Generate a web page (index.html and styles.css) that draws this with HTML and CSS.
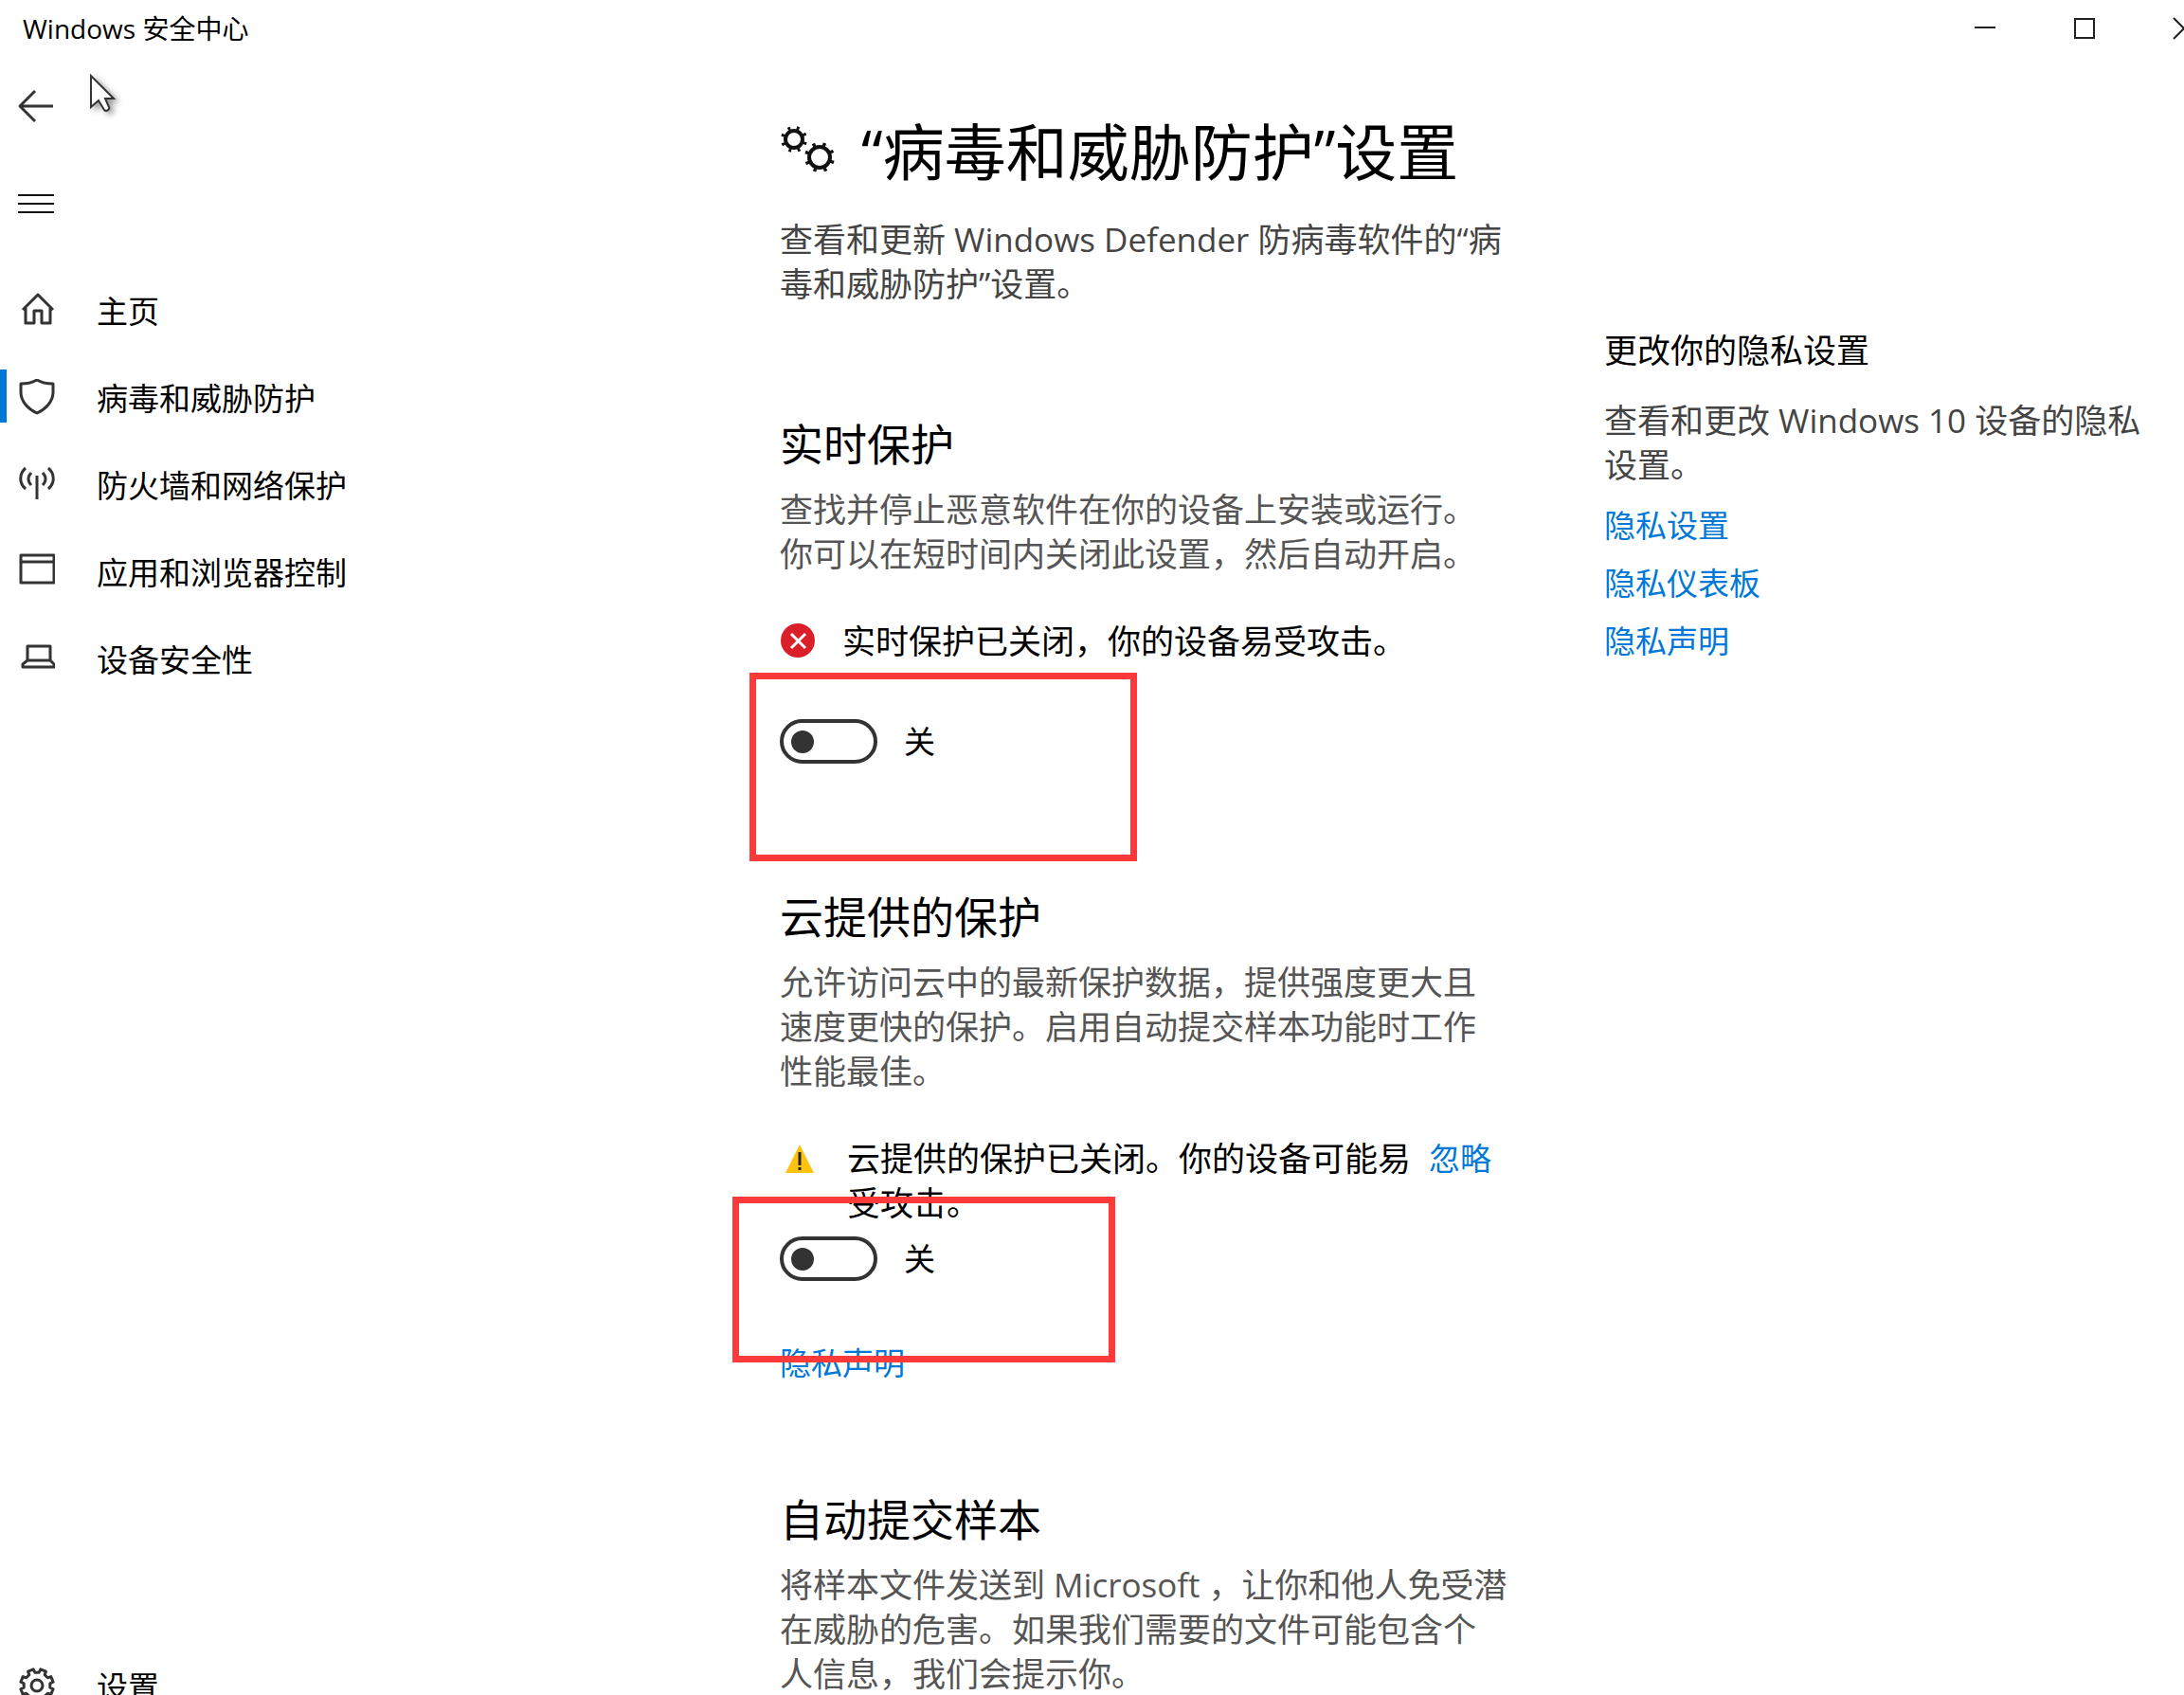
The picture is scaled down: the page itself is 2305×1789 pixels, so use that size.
FILE: index.html
```html
<!DOCTYPE html>
<html lang="zh-CN">
<head>
    <meta charset="UTF-8">
    <meta name="viewport" content="width=device-width, initial-scale=1.0">
    <title>Windows 安全中心</title>
    <link rel="stylesheet" href="styles.css">
</head>
<body>

<header class="titlebar">
    <span class="titlebar-text">Windows 安全中心</span>
    <div class="window-buttons">
        <button type="button" aria-label="最小化">
            <svg width="24" height="24" viewBox="0 0 24 24"><path d="M1 11H23"/></svg>
        </button>
        <button type="button" aria-label="最大化">
            <svg width="24" height="24" viewBox="0 0 24 24"><path d="M2 2H22V22H2Z"/></svg>
        </button>
        <button type="button" aria-label="关闭">
            <svg width="24" height="24" viewBox="0 0 24 24"><path d="M1 1L23 23M23 1L1 23"/></svg>
        </button>
    </div>
</header>

<div class="layout">
    <nav class="sidebar">
        <button type="button" class="icon-button" aria-label="返回">
            <svg class="icon" width="40" height="40" viewBox="0 0 40 40"><path d="M38 20H3M19 4L3 20L19 36"/></svg>
        </button>
        <button type="button" class="icon-button" aria-label="菜单">
            <svg class="icon thin" width="40" height="40" viewBox="0 0 40 40"><path d="M1 11H39M1 20H39M1 29H39"/></svg>
        </button>

        <ul class="nav-list">
            <li><a href="#" class="nav-item">
                <svg class="icon" width="40" height="40" viewBox="0 0 40 40"><path d="M6 19L22 3L38 19M9 17V33H18V20H26V33H35V17"/></svg>
                主页
            </a></li>
            <li><a href="#" class="nav-item active">
                <svg class="icon" width="40" height="40" viewBox="0 0 40 40"><path d="M21 1C16 4 10 5 4 5V14C4 24 12 32 21 36C30 32 38 24 38 14V5C32 5 26 4 21 1Z"/></svg>
                病毒和威胁防护
            </a></li>
            <li><a href="#" class="nav-item">
                <svg class="icon" width="40" height="40" viewBox="0 0 40 40"><path d="M21 10V35M15 7C11 11 11 16 15 20M27 7C31 11 31 16 27 20M9 2C2 8 2 18 9 24M33 2C40 8 40 18 33 24"/></svg>
                防火墙和网络保护
            </a></li>
            <li><a href="#" class="nav-item">
                <svg class="icon" width="40" height="40" viewBox="0 0 40 40"><path d="M4 2H39V31H4ZM4 9H39"/></svg>
                应用和浏览器控制
            </a></li>
            <li><a href="#" class="nav-item">
                <svg class="icon" width="40" height="40" viewBox="0 0 40 40"><path d="M11 6H35V21H11ZM11 21L6 25V28H39V25L35 21"/></svg>
                设备安全性
            </a></li>
        </ul>

        <a href="#" class="nav-item nav-settings">
            <svg class="icon" width="40" height="40" viewBox="-21 -19 40 40">
                <path d="M13.8 2.2L17.1 3.8L14.8 9.4L11.3 8.2L8.2 11.3L9.4 14.8L3.8 17.1L2.2 13.8H-2.2L-3.8 17.1L-9.4 14.8L-8.2 11.3L-11.3 8.2L-14.8 9.4L-17.1 3.8L-13.8 2.2V-2.2L-17.1 -3.8L-14.8 -9.4L-11.3 -8.2L-8.2 -11.3L-9.4 -14.8L-3.8 -17.1L-2.2 -13.8H2.2L3.8 -17.1L9.4 -14.8L8.2 -11.3L11.3 -8.2L14.8 -9.4L17.1 -3.8L13.8 -2.2Z"/>
                <circle r="6"/>
            </svg>
            设置
        </a>
    </nav>

    <main class="content">
        <h1>
            <svg class="gears" width="60" height="56" viewBox="0 0 60 56">
                <circle cx="15" cy="15" r="9"/>
                <circle class="teeth" cx="15" cy="15" r="12" pathLength="80"/>
                <circle cx="42" cy="34" r="11"/>
                <circle class="teeth" cx="42" cy="34" r="14" pathLength="80"/>
            </svg>
            “病毒和威胁防护”设置
        </h1>
        <p class="intro">查看和更新 Windows Defender 防病毒软件的“病毒和威胁防护”设置。</p>

        <section class="realtime">
            <h2>实时保护</h2>
            <p>查找并停止恶意软件在你的设备上安装或运行。你可以在短时间内关闭此设置，然后自动开启。</p>
            <div class="alert">
                <svg width="38" height="38" viewBox="0 0 38 38">
                    <circle cx="19" cy="19" r="18" fill="#da1f2b"/>
                    <path d="M12 12L27 27M27 12L12 27" stroke="#fff" stroke-width="3"/>
                </svg>
                <span>实时保护已关闭，你的设备易受攻击。</span>
            </div>
            <div class="toggle-row">
                <input type="checkbox" class="toggle" id="realtime-toggle">
                <label for="realtime-toggle">关</label>
                <div class="highlight"></div>
            </div>
        </section>

        <section class="cloud">
            <h2>云提供的保护</h2>
            <p>允许访问云中的最新保护数据，提供强度更大且速度更快的保护。启用自动提交样本功能时工作性能最佳。</p>
            <div class="alert">
                <svg width="43" height="38" viewBox="0 0 43 38">
                    <path d="M21 5L36 35H6Z" fill="#ffc20e"/>
                    <path d="M21 13V27M21 29V32" stroke="#222" stroke-width="3"/>
                </svg>
                <span>云提供的保护已关闭。你的设备可能易受攻击。</span>
                <a href="#">忽略</a>
            </div>
            <div class="toggle-row">
                <input type="checkbox" class="toggle" id="cloud-toggle">
                <label for="cloud-toggle">关</label>
                <div class="highlight"></div>
            </div>
            <a href="#" class="section-link">隐私声明</a>
        </section>

        <section class="samples">
            <h2>自动提交样本</h2>
            <p>将样本文件发送到 Microsoft ，让你和他人免受潜在威胁的危害。如果我们需要的文件可能包含个人信息，我们会提示你。</p>
        </section>
    </main>

    <aside class="privacy">
        <h3>更改你的隐私设置</h3>
        <p>查看和更改 Windows 10 设备的隐私设置。</p>
        <a href="#">隐私设置</a>
        <a href="#">隐私仪表板</a>
        <a href="#">隐私声明</a>
    </aside>
</div>

<!-- mouse pointer -->
<svg class="cursor" width="40" height="48" viewBox="0 0 40 48">
    <path d="M2 2V35L10 28L16 38C18 40 22 38 21 35L17 26H26Z"/>
</svg>

</body>
</html>
```
FILE: styles.css
```css
* {
    box-sizing: border-box;
}
body {
    margin: 0;
    height: 100vh;
    display: flex;
    flex-direction: column;
    position: relative;
    overflow: hidden;
    background-color: #fff;
    color: #000;
    font-family: "Open Sans", "Noto Sans CJK SC", sans-serif;
    font-size: 35px;
    line-height: 47px;
}
h1, h2, h3, p, ul {
    margin: 0;
    padding: 0;
    font-weight: normal;
}
a {
    color: #0078d7;
    font-size: 33px;
    text-decoration: none;
}
button {
    padding: 0;
    border: none;
    background: none;
}
svg {
    flex-shrink: 0;
}

/* Title bar */
.titlebar {
    display: flex;
    justify-content: space-between;
    align-items: center;
    height: 60px;
    flex-shrink: 0;
    padding-left: 24px;
    font-size: 28px;
}
.window-buttons {
    display: flex;
    margin-right: -52px;
}
.window-buttons button {
    width: 105px;
    height: 60px;
}
.window-buttons svg {
    display: block;
    margin: auto;
    fill: none;
    stroke: #222;
    stroke-width: 2;
}

.layout {
    display: flex;
    flex: 1;
    min-height: 0;
}

/* Sidebar */
.sidebar {
    display: flex;
    flex-direction: column;
    flex: 0 0 823px;
}
.icon {
    fill: none;
    stroke: #333;
    stroke-width: 3;
    stroke-linejoin: round;
}
.thin {
    stroke: #111;
    stroke-width: 2;
}
.icon-button {
    display: flex;
    align-items: center;
    width: 76px;
    height: 103px;
    flex-shrink: 0;
    padding-left: 18px;
}
.nav-list {
    list-style: none;
    margin-top: 16px;
}
.nav-item {
    display: flex;
    align-items: center;
    gap: 44px;
    height: 92px;
    padding-left: 18px;
    color: #000;
}
.active {
    background: linear-gradient(#0078d7, #0078d7) 0 16px / 7px 56px no-repeat;
}
.nav-settings {
    margin-top: auto;
    margin-bottom: -37px;
}

/* Settings */
.content {
    flex: 1;
    padding-top: 56px;
}
.content p {
    max-width: 768px;
    color: #555;
}
h1 {
    display: flex;
    align-items: center;
    gap: 26px;
    font-size: 65px;
    line-height: 88px;
    white-space: nowrap;
}
.gears {
    fill: none;
    stroke: #111;
    stroke-width: 4;
}
.teeth {
    stroke-width: 4;
    stroke-dasharray: 3 7;
    stroke-dashoffset: -3;
}
.content .intro {
    margin-top: 25px;
    color: #444;
}
h2 {
    margin-bottom: 14px;
    font-size: 46px;
    line-height: 64px;
}
.realtime {
    margin-top: 113px;
}
.cloud {
    margin-top: 129px;
}
.samples {
    margin-top: 109px;
}
.alert {
    display: flex;
    align-items: flex-start;
    gap: 28px;
    max-width: 768px;
    margin-top: 45px;
}
.alert svg {
    margin-top: 4px;
}
.alert span {
    max-width: 600px;
}
.alert a {
    margin-left: -14px;
    white-space: nowrap;
}
.toggle-row {
    display: flex;
    align-items: center;
    gap: 28px;
    position: relative;
    height: 47px;
    margin-top: 59px;
    font-size: 33px;
}
.cloud .toggle-row {
    margin-top: 12px;
}
.toggle {
    appearance: none;
    display: flex;
    align-items: center;
    width: 103px;
    height: 47px;
    margin: 0;
    padding-left: 8px;
    border: 4px solid #333;
    border-radius: 24px;
}
.toggle::before {
    content: "";
    width: 24px;
    height: 24px;
    border-radius: 50%;
    background-color: #333;
}
.toggle:checked {
    justify-content: flex-end;
    padding: 0 8px 0 0;
}
.highlight {
    position: absolute;
    top: -49px;
    left: -32px;
    width: 409px;
    height: 199px;
    border: 7px solid #fc3a3a;
    pointer-events: none;
}
.cloud .highlight {
    top: -42px;
    left: -50px;
    width: 404px;
    height: 175px;
}
.section-link {
    display: block;
    width: max-content;
    margin-top: 63px;
}

/* Privacy column */
.privacy {
    display: flex;
    flex-direction: column;
    align-items: flex-start;
    gap: 14px;
    flex: 0 0 612px;
    padding: 286px 24px 0 0;
}
.privacy h3 {
    margin-bottom: 13px;
    font-size: 35px;
}
.privacy p {
    margin-bottom: 3px;
    color: #444;
}

.cursor {
    position: absolute;
    top: 78px;
    left: 94px;
    fill: #fff;
    stroke: #333;
    stroke-width: 2;
    filter: drop-shadow(4px 3px 3px rgba(0, 0, 0, 0.4));
}
```
